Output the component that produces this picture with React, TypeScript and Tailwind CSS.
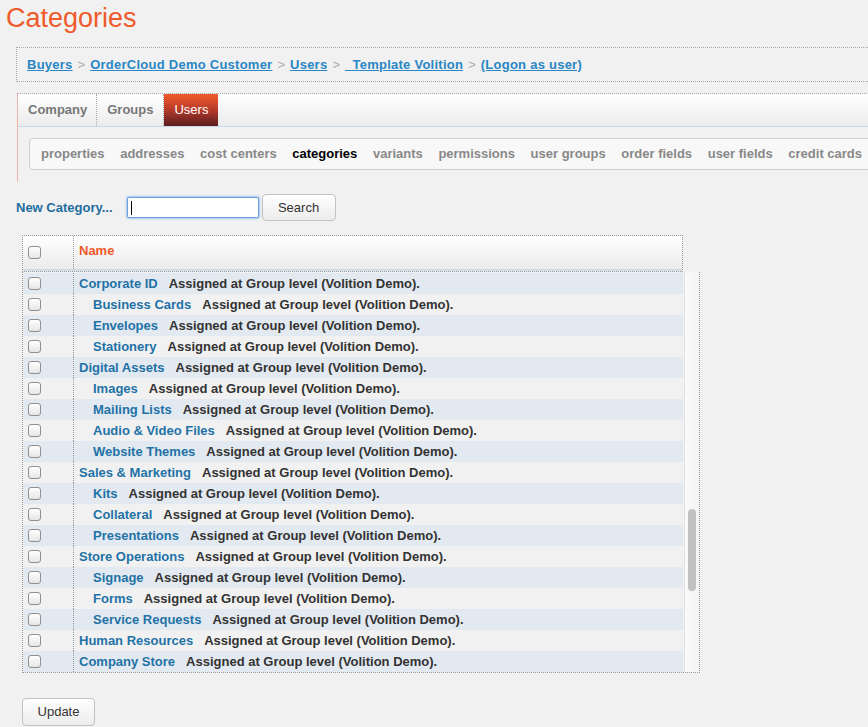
import React from "react";

type Row = { name: string; child?: boolean };

const ROWS: Row[] = [
  { name: "Corporate ID" },
  { name: "Business Cards", child: true },
  { name: "Envelopes", child: true },
  { name: "Stationery", child: true },
  { name: "Digital Assets" },
  { name: "Images", child: true },
  { name: "Mailing Lists", child: true },
  { name: "Audio & Video Files", child: true },
  { name: "Website Themes", child: true },
  { name: "Sales & Marketing" },
  { name: "Kits", child: true },
  { name: "Collateral", child: true },
  { name: "Presentations", child: true },
  { name: "Store Operations" },
  { name: "Signage", child: true },
  { name: "Forms", child: true },
  { name: "Service Requests", child: true },
  { name: "Human Resources" },
  { name: "Company Store" },
];

const SUBNAV = [
  "properties",
  "addresses",
  "cost centers",
  "categories",
  "variants",
  "permissions",
  "user groups",
  "order fields",
  "user fields",
  "credit cards",
];

const CRUMBS = ["Buyers", "OrderCloud Demo Customer", "Users", "_Template Volition", "(Logon as user)"];

function Checkbox() {
  return (
    <span className="block h-[13px] w-[13px] rounded-[3px] border border-[#8f8f8f] bg-gradient-to-b from-white to-[#e6e6e6]" />
  );
}

export default function App() {
  return (
    <div className="h-[727px] w-[868px] overflow-hidden bg-[#f1f1f1] font-['Liberation_Sans',Arial,sans-serif] text-[13px]">
      {/* Page title */}
      <h1 className="pl-[6px] pt-[5px] text-[27px] leading-none text-[#ee5a2b]">Categories</h1>

      {/* Breadcrumb */}
      <div className="ml-[16px] mt-[15px] flex h-[35px] w-[900px] items-center border-y border-l border-dotted border-[#a8a8a8] pl-[10px] font-bold">
        {CRUMBS.map((c, i) => (
          <React.Fragment key={c}>
            {i > 0 && <span className="px-[5px] font-normal text-[#aaa]">&gt;</span>}
            <a className="tracking-[0.25px] text-[#2a86c4] underline">{c}</a>
          </React.Fragment>
        ))}
      </div>

      {/* Tab panel */}
      <div className="ml-[17px] mt-[11px] w-[900px] border-t border-dotted border-[#aaa]">
        <div className="border-l border-[#efb5a4]">
          <div className="flex h-[33px] border-b border-[#c9d8ea] bg-gradient-to-b from-white to-[#ebebeb] font-bold text-[#777]">
            <div className="flex items-center border-r border-dotted border-[#aaa] pl-[10px] pr-[9px]">Company</div>
            <div className="flex items-center border-r border-dotted border-[#aaa] pl-[10px] pr-[10px]">Groups</div>
            <div className="flex items-center bg-gradient-to-b from-[#f25b29] via-[#b53a2a] to-[#5a1c1e] px-[10px] font-normal text-white">
              Users
            </div>
          </div>
          <div className="h-[55px] pl-[11px] pt-[11px]">
            <div className="flex h-[32px] items-center gap-[15.6px] rounded-[4px] border border-[#cfcfcf] bg-[#f8f8f8] pl-[11px] font-bold text-[#888]">
              {SUBNAV.map((s) => (
                <span key={s} className={s === "categories" ? "text-black" : ""}>
                  {s}
                </span>
              ))}
            </div>
          </div>
        </div>
      </div>

      {/* Search line */}
      <div className="ml-[16px] mt-[12px] flex h-[27px] items-center">
        <span className="font-bold text-[#1e6e9f]">New Category...</span>
        <div className="ml-[14px] flex h-[21px] w-[132px] items-center rounded-[2px] border border-[#6b9fdc] bg-white pl-[3px] shadow-[0_0_2px_1px_#a9c8ef]">
          <span className="h-[14px] w-px bg-black" />
        </div>
        <button className="ml-[3px] h-[27px] w-[74px] rounded-[4px] border border-[#c2c2c2] bg-gradient-to-b from-white to-[#ececec] text-[#333]">
          Search
        </button>
      </div>

      {/* Table */}
      <div className="ml-[22px] mt-[14px] w-[678px]">
        <div className="flex h-[37px] w-[661px] border border-dotted border-[#999]">
          <div className="flex w-full border-b-2 border-[#cfdcea] bg-gradient-to-b from-white to-[#ebebeb]">
            <div className="flex w-[51px] items-center border-r border-dotted border-[#999] pl-[5px]">
              <Checkbox />
            </div>
            <div className="flex items-center pb-[3px] pl-[5px] font-bold text-[#f05a28]">Name</div>
          </div>
        </div>
        <div className="flex h-[401px] border-x border-b border-dotted border-[#999]">
          <div className="w-[660px] pt-[1px]">
            {ROWS.map((r, i) => (
              <div
                key={r.name}
                className={`flex h-[21px] items-center ${i % 2 === 0 ? "bg-[#e3e9f0]" : "bg-[#f1f1f1]"}`}
              >
                <div className="flex h-full w-[51px] items-center border-r border-dotted border-[#999] pl-[5px]">
                  <Checkbox />
                </div>
                <span className={`${r.child ? "pl-[19px]" : "pl-[5px]"} font-bold text-[#1f72a6]`}>{r.name}</span>
                <span className="ml-[11px] font-bold text-[#333]">Assigned at Group level (Volition Demo).</span>
              </div>
            ))}
          </div>
          <div className="ml-[1px] w-[15px] border-l border-[#e2e2e2] bg-gradient-to-r from-[#fafafa] to-[#f3f3f3] pl-[3px] pt-[237px]">
            <div className="h-[82px] w-[8px] rounded-full bg-[#c1c1c1]" />
          </div>
        </div>
      </div>

      {/* Update */}
      <button className="ml-[22px] mt-[25px] h-[28px] w-[73px] rounded-[4px] border border-[#c2c2c2] bg-gradient-to-b from-white to-[#ececec] text-[#333]">
        Update
      </button>
    </div>
  );
}
